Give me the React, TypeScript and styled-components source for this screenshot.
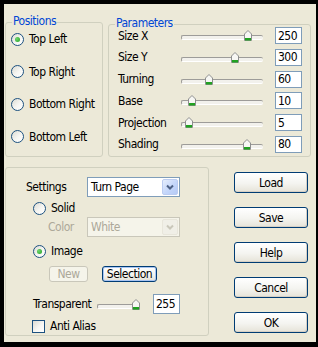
import styled, { createGlobalStyle } from 'styled-components';

const GlobalStyle = createGlobalStyle`
  html, body {
    margin: 0;
    padding: 0;
    background: #000000;
  }
  * {
    box-sizing: border-box;
  }
`;

const FONT = `"DejaVu Sans Condensed", "Liberation Sans", sans-serif`;

const Frame = styled.div`
  width: 318px;
  height: 347px;
  background: #000000;
  padding: 4px 2px 5px 4px;
  font-family: ${FONT};
  font-size: 12px;
  letter-spacing: -0.5px;
  color: #000000;
`;

const Dialog = styled.div`
  height: 100%;
  background: #ECE9D8;
  display: flex;
  flex-direction: column;
`;

const TopRow = styled.div`
  display: flex;
  margin-top: 18px;
  padding-left: 1px;
  gap: 5px;
`;

const BottomRow = styled.div`
  display: flex;
  margin-top: 10px;
  padding-left: 1px;
  gap: 25px;
`;

const GroupBox = styled.div<{ $w: number; $h: number; $top?: number }>`
  position: relative;
  width: ${(p) => p.$w}px;
  height: ${(p) => p.$h}px;
  margin-top: ${(p) => p.$top ?? 0}px;
  border: 1px solid #D0D0BF;
  border-radius: 3px;
  display: flex;
  flex-direction: column;
`;

const Legend = styled.span`
  position: absolute;
  top: -7px;
  left: 6px;
  padding: 0 1px;
  background: #ECE9D8;
  color: #0046D5;
  line-height: 11px;
`;

/* ---------- radio / checkbox ---------- */

const RadioCircle = styled.span<{ $checked?: boolean }>`
  display: inline-flex;
  align-items: center;
  justify-content: center;
  width: 13px;
  height: 13px;
  flex: none;
  border-radius: 50%;
  border: 1px solid #1C5180;
  background: linear-gradient(135deg, #DCDBD3 0%, #F6F6F3 55%, #FFFFFF 100%);

  &::after {
    content: '';
    display: ${(p) => (p.$checked ? 'block' : 'none')};
    width: 5px;
    height: 5px;
    border-radius: 50%;
    background: radial-gradient(circle at 35% 35%, #6FD56F, #21A121);
  }
`;

const CheckSquare = styled.span`
  display: inline-block;
  width: 13px;
  height: 13px;
  flex: none;
  border: 1px solid #1C5180;
  background: linear-gradient(135deg, #DCDBD3 0%, #F6F6F3 55%, #FFFFFF 100%);
`;

const Choice = styled.label<{ $indent?: number }>`
  display: flex;
  align-items: center;
  gap: 5px;
  height: 20px;
  padding-left: ${(p) => p.$indent ?? 0}px;
  white-space: nowrap;
`;

const RadioList = styled.div`
  display: flex;
  flex-direction: column;
  gap: 12.5px;
  padding: 6px 0 0 5px;
`;

/* ---------- parameters ---------- */

const ParamList = styled.div`
  display: flex;
  flex-direction: column;
  gap: 4.8px;
  padding: 2px 0 0 9px;
`;

const ParamRow = styled.div`
  display: flex;
  align-items: center;
  height: 17px;
  line-height: 12px;
`;

const ParamLabel = styled.span<{ $w: number }>`
  width: ${(p) => p.$w}px;
  flex: none;
  white-space: nowrap;
`;

const TrackBox = styled.div<{ $w: number }>`
  position: relative;
  width: ${(p) => p.$w}px;
  height: 17px;
  flex: none;

  &::before {
    content: '';
    position: absolute;
    left: 0;
    right: 0;
    top: 8px;
    height: 3px;
    border-radius: 2px;
    border-top: 1px solid #9D9C99;
    border-left: 1px solid #9D9C99;
    border-bottom: 1px solid #FFFFFF;
    background: #F2F1EC;
  }
`;

const Thumb = styled.svg`
  position: absolute;
  top: 3px;
  width: 8px;
  height: 11px;
`;

const Slider = ({ width, pos }: { width: number; pos: number }) => (
  <TrackBox $w={width}>
    <Thumb viewBox="0 0 8 11" style={{ left: pos - 4 }}>
      <path d="M0.5 4 L4 0.5 L7.5 4 L7.5 10.5 L0.5 10.5 Z" fill="#F7F7F4" stroke="#8E8F8F" />
      <rect x="1" y="8" width="6" height="2.5" fill="#21A121" />
    </Thumb>
  </TrackBox>
);

const NumBox = styled.div<{ $h?: number; $gap: number }>`
  width: 27px;
  height: ${(p) => p.$h ?? 17}px;
  margin-left: ${(p) => p.$gap}px;
  flex: none;
  border: 1px solid #7F9DB9;
  background: #FFFFFF;
  padding-left: 2px;
  display: flex;
  align-items: center;
`;

/* ---------- settings ---------- */

const SettingsList = styled.div`
  display: flex;
  flex-direction: column;
  padding-top: 9px;
`;

const FormRow = styled.div<{ $indent: number; $top?: number; $gap?: number }>`
  display: flex;
  align-items: center;
  gap: ${(p) => p.$gap ?? 0}px;
  padding-left: ${(p) => p.$indent}px;
  margin-top: ${(p) => p.$top ?? 0}px;
  min-height: 20px;
`;

const FieldLabel = styled.span<{ $w: number; $disabled?: boolean }>`
  width: ${(p) => p.$w}px;
  flex: none;
  white-space: nowrap;
  color: ${(p) => (p.$disabled ? '#ACA899' : '#000000')};
`;

const Combo = styled.div<{ $disabled?: boolean }>`
  width: 93px;
  height: 20px;
  display: flex;
  align-items: center;
  justify-content: space-between;
  padding: 1px;
  border: 1px solid ${(p) => (p.$disabled ? '#C9C7BA' : '#7F9DB9')};
  background: ${(p) => (p.$disabled ? '#F5F4EA' : '#FFFFFF')};
  color: ${(p) => (p.$disabled ? '#ACA899' : '#000000')};
`;

const ComboText = styled.span`
  padding-left: 2px;
`;

const ComboButton = styled.span<{ $disabled?: boolean }>`
  width: 16px;
  height: 16px;
  display: flex;
  align-items: center;
  justify-content: center;
  border-radius: 2px;
  background: ${(p) =>
    p.$disabled
      ? '#F0EFE7'
      : 'linear-gradient(135deg, #E6EEFC 0%, #C4D6FA 55%, #B5CAF5 100%)'};
  border: 1px solid ${(p) => (p.$disabled ? '#E8E6DB' : '#BBCCF1')};
`;

const Chevron = ({ disabled }: { disabled?: boolean }) => (
  <svg width="8" height="6" viewBox="0 0 8 6">
    <path d="M1 1.5 L4 4.5 L7 1.5" fill="none" stroke={disabled ? '#C9C7BA' : '#4D6185'} strokeWidth="2" />
  </svg>
);

const SmallButton = styled.div<{ $w: number; $disabled?: boolean; $focused?: boolean }>`
  width: ${(p) => p.$w}px;
  height: 16px;
  display: flex;
  align-items: center;
  justify-content: center;
  border-radius: 3px;
  border: 1px solid ${(p) => (p.$disabled ? '#C9C7BA' : '#003C74')};
  background: ${(p) =>
    p.$disabled ? '#F5F4EA' : 'linear-gradient(#FFFFFF 0%, #F3F3EE 60%, #E3E0D5 100%)'};
  color: ${(p) => (p.$disabled ? '#ACA899' : '#000000')};
  box-shadow: ${(p) => (p.$focused ? 'inset 0 0 0 1px #A9C5F2' : 'none')};
`;

/* ---------- right buttons ---------- */

const ButtonColumn = styled.div`
  display: flex;
  flex-direction: column;
  gap: 14px;
  padding-top: 5px;
`;

const PushButton = styled.div`
  width: 74px;
  height: 21px;
  display: flex;
  align-items: center;
  justify-content: center;
  border-radius: 3px;
  border: 1px solid #003C74;
  background: linear-gradient(#FFFFFF 0%, #F4F4F0 55%, #E6E3D8 100%);
  box-shadow: inset -1px -1px 0 #D6D0C5;
`;

const params = [
  { label: 'Size X', pos: 67, value: '250' },
  { label: 'Size Y', pos: 54, value: '300' },
  { label: 'Turning', pos: 28, value: '60' },
  { label: 'Base', pos: 11, value: '10' },
  { label: 'Projection', pos: 8, value: '5' },
  { label: 'Shading', pos: 66, value: '80' },
];

const positions = [
  { label: 'Top Left', checked: true },
  { label: 'Top Right' },
  { label: 'Bottom Right' },
  { label: 'Bottom Left' },
];

export default function App() {
  return (
    <Frame>
      <GlobalStyle />
      <Dialog>
        <TopRow>
          <GroupBox $w={98} $h={135}>
            <Legend>Positions</Legend>
            <RadioList>
              {positions.map((p) => (
                <Choice key={p.label}>
                  <RadioCircle $checked={p.checked} />
                  {p.label}
                </Choice>
              ))}
            </RadioList>
          </GroupBox>
          <GroupBox $w={203} $h={133} $top={2}>
            <Legend>Parameters</Legend>
            <ParamList>
              {params.map((p) => (
                <ParamRow key={p.label}>
                  <ParamLabel $w={63}>{p.label}</ParamLabel>
                  <Slider width={82} pos={p.pos} />
                  <NumBox $gap={12}>{p.value}</NumBox>
                </ParamRow>
              ))}
            </ParamList>
          </GroupBox>
        </TopRow>
        <BottomRow>
          <GroupBox $w={204} $h={169}>
            <SettingsList>
              <FormRow $indent={20}>
                <FieldLabel $w={61}>Settings</FieldLabel>
                <Combo>
                  <ComboText>Turn Page</ComboText>
                  <ComboButton>
                    <Chevron />
                  </ComboButton>
                </Combo>
              </FormRow>
              <FormRow $indent={27} $top={1}>
                <Choice>
                  <RadioCircle />
                  Solid
                </Choice>
              </FormRow>
              <FormRow $indent={42} $top={-1}>
                <FieldLabel $w={39} $disabled>
                  Color
                </FieldLabel>
                <Combo $disabled>
                  <ComboText>White</ComboText>
                  <ComboButton $disabled>
                    <Chevron disabled />
                  </ComboButton>
                </Combo>
              </FormRow>
              <FormRow $indent={27} $top={4}>
                <Choice>
                  <RadioCircle $checked />
                  Image
                </Choice>
              </FormRow>
              <FormRow $indent={43} $top={3} $gap={14}>
                <SmallButton $w={39} $disabled>
                  New
                </SmallButton>
                <SmallButton $w={55} $focused>
                  Selection
                </SmallButton>
              </FormRow>
              <FormRow $indent={27} $top={10}>
                <FieldLabel $w={64}>Transparent</FieldLabel>
                <Slider width={41} pos={39} />
                <NumBox $gap={15} $h={20}>
                  255
                </NumBox>
              </FormRow>
              <FormRow $indent={26} $top={2}>
                <Choice>
                  <CheckSquare />
                  Anti Alias
                </Choice>
              </FormRow>
            </SettingsList>
          </GroupBox>
          <ButtonColumn>
            <PushButton>Load</PushButton>
            <PushButton>Save</PushButton>
            <PushButton>Help</PushButton>
            <PushButton>Cancel</PushButton>
            <PushButton>OK</PushButton>
          </ButtonColumn>
        </BottomRow>
      </Dialog>
    </Frame>
  );
}
